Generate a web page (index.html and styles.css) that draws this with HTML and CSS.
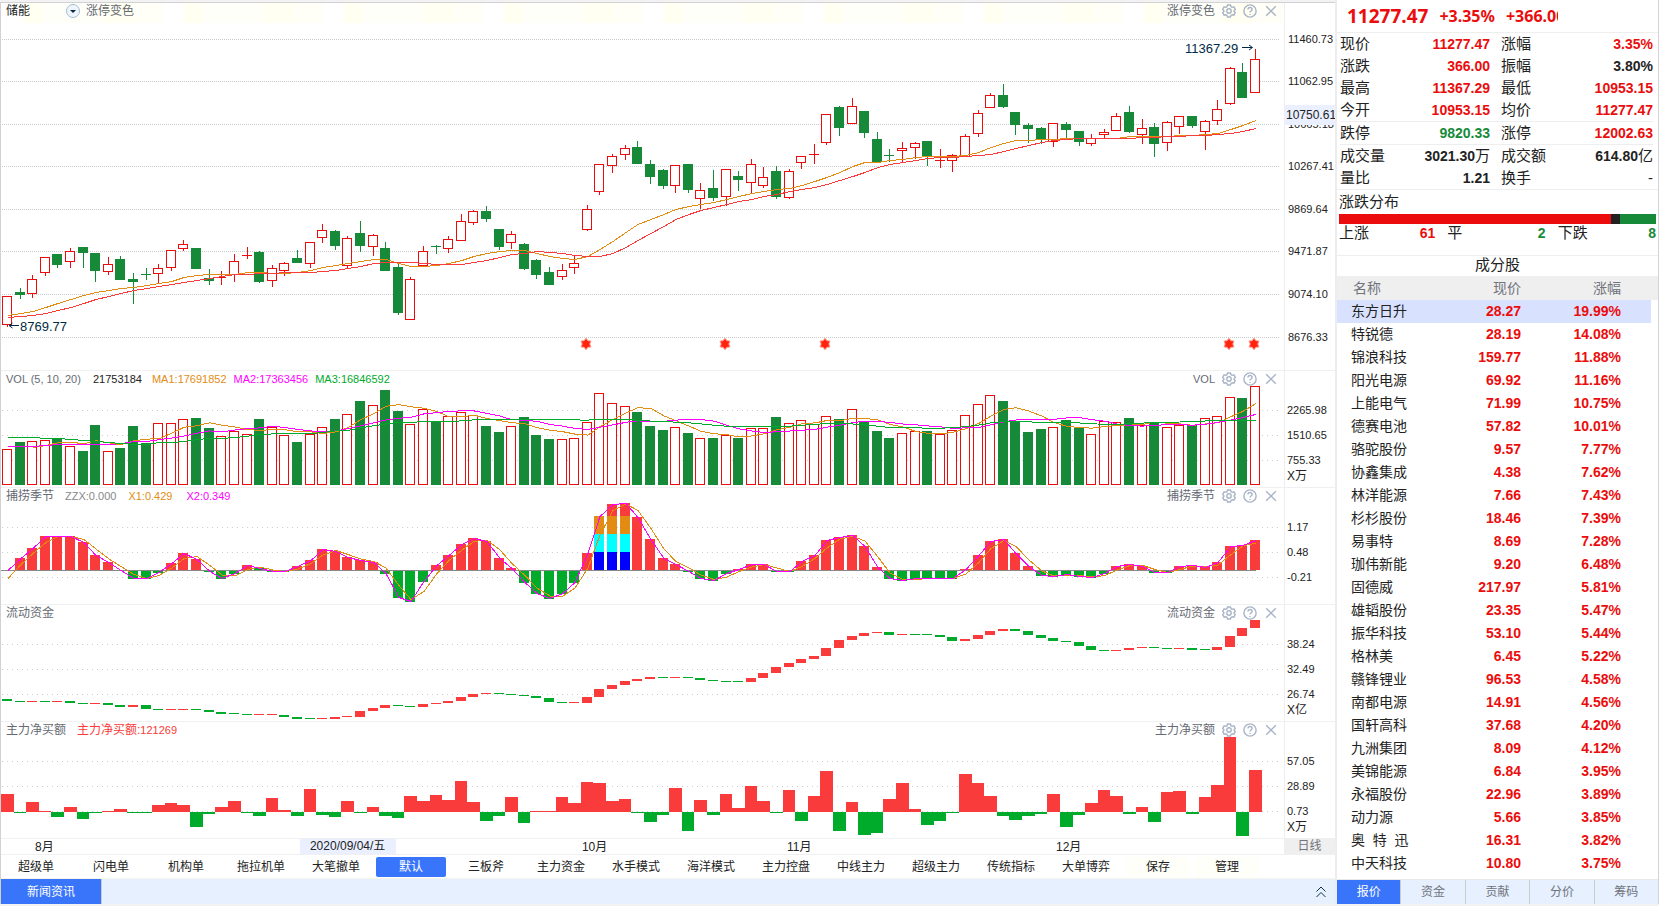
FILE: index.html
```html
<!DOCTYPE html>
<html lang="zh-CN">
<head>
<meta charset="utf-8">
<title>储能 11277.47</title>
<link rel="stylesheet" href="styles.css">
</head>
<body>
<svg class="sprite" aria-hidden="true">
  <symbol id="i-gear" viewBox="0 0 16 16"><path d="M6.300 1.200h3.400l.6 1.900 1.300.7 2-.5 1.600 2.900-1.400 1.500v.7l1.400 1.500-1.600 2.900-2-.5-1.300.7-.6 1.900H6.300L5.700 13l-1.300-.7-2 .5L.8 9.900l1.400-1.500v-.7L.8 6.200l1.600-2.900 2 .5 1.300-.7z"/><circle cx="8" cy="8" r="2.500"/></symbol>
  <symbol id="i-help" viewBox="0 0 16 16"><circle cx="8" cy="8" r="7"/><path d="M5.700 6.300c0-3 4.700-2.900 4.700-.1 0 1.800-2.400 1.800-2.400 3.600M8 11.300v1.300"/></symbol>
  <symbol id="i-close" viewBox="0 0 16 16"><path d="M2.500 2.500l11 11M13.500 2.500l-11 11"/></symbol>
</svg>
<div class="app">
  <main class="charts">
    <section class="panel price">
      <div class="plot">
        <svg id="price" viewBox="1 3 1283 367" preserveAspectRatio="none"></svg>
        <header class="head">
          <span class="name">储能</span>
          <button class="drop" aria-label="切换指标"><svg viewBox="0 0 14 14"><circle cx="7" cy="7" r="6.500"/><path d="M4 6h6L7 9z"/></svg></button>
          <span>涨停变色</span>
          <span class="tools"><span>涨停变色</span></span>
        </header>
      </div>
      <div class="axis" id="axis-price"></div>
    </section>
    <section class="panel volume">
      <div class="plot">
        <svg id="vol" viewBox="1 1 1283 116" preserveAspectRatio="none"></svg>
        <header class="head">
          <span class="vol-name">VOL (5, 10, 20)</span><span class="ink">21753184</span><span class="c-orange">MA1:17691852</span><span class="c-pink">MA2:17363456</span><span class="c-green">MA3:16846592</span>
          <span class="tools"><span>VOL</span></span>
        </header>
      </div>
      <div class="axis" id="axis-vol"></div>
    </section>
    <section class="panel">
      <div class="plot">
        <svg id="season" viewBox="1 1 1283 116" preserveAspectRatio="none"></svg>
        <header class="head">
          <span class="cn">捕捞季节</span><span class="c-grey">ZZX:0.000</span><span class="c-orange">X1:0.429</span><span class="c-pink">X2:0.349</span>
          <span class="tools"><span class="cn">捕捞季节</span></span>
        </header>
      </div>
      <div class="axis" id="axis-season"></div>
    </section>
    <section class="panel">
      <div class="plot">
        <svg id="fund" viewBox="1 1 1283 116" preserveAspectRatio="none"></svg>
        <header class="head">
          <span class="cn">流动资金</span>
          <span class="tools"><span class="cn">流动资金</span></span>
        </header>
      </div>
      <div class="axis" id="axis-fund"></div>
    </section>
    <section class="panel">
      <div class="plot">
        <svg id="net" viewBox="1 1 1283 116" preserveAspectRatio="none"></svg>
        <header class="head">
          <span class="cn">主力净买额</span><span class="c-red"><span class="cn">主力净买额:</span>121269</span>
          <span class="tools"><span class="cn">主力净买额</span></span>
        </header>
      </div>
      <div class="axis" id="axis-net"></div>
    </section>
    <div class="dates">
      <div class="scale" id="dates"></div>
      <button class="period">日线</button>
    </div>
    <nav class="modes">
      <button>超级单</button><button>闪电单</button><button>机构单</button><button>拖拉机单</button><button>大笔撤单</button><button class="on">默认</button><button>三板斧</button><button>主力资金</button><button>水手模式</button><button>海洋模式</button><button>主力控盘</button><button>中线主力</button><button>超级主力</button><button>传统指标</button><button>大单博弈</button><button class="short">保存</button><button class="short">管理</button>
    </nav>
    <div class="news">
      <button class="news-tab">新闻资讯</button>
      <button class="expand" aria-label="展开"><svg viewBox="0 0 10 12"><path d="M.5 5.500L5 1l4.500 4.500M.5 11L5 6.500 9.500 11"/></svg></button>
    </div>
  </main>

  <aside class="quote">
    <div class="top"><strong>11277.47</strong><b>+3.35%</b><b>+366.00</b></div>
    <dl class="stats">
      <div><dt>现价</dt><dd class="up">11277.47</dd></div><div><dt>涨幅</dt><dd class="up">3.35%</dd></div>
      <div><dt>涨跌</dt><dd class="up">366.00</dd></div><div><dt>振幅</dt><dd>3.80%</dd></div>
      <div><dt>最高</dt><dd class="up">11367.29</dd></div><div><dt>最低</dt><dd class="up">10953.15</dd></div>
      <div><dt>今开</dt><dd class="up">10953.15</dd></div><div><dt>均价</dt><dd class="up">11277.47</dd></div>
    </dl>
    <dl class="stats ruled">
      <div><dt>跌停</dt><dd class="down">9820.33</dd></div><div><dt>涨停</dt><dd class="up">12002.63</dd></div>
    </dl>
    <dl class="stats ruled">
      <div><dt>成交量</dt><dd>3021.30<i>万</i></dd></div><div><dt>成交额</dt><dd>614.80<i>亿</i></dd></div>
      <div><dt>量比</dt><dd>1.21</dd></div><div><dt>换手</dt><dd><i>-</i></dd></div>
    </dl>
    <section class="spread">
      <h2>涨跌分布</h2>
      <div class="bar"><span class="b-up"></span><span class="b-flat"></span><span class="b-down"></span></div>
      <dl class="counts">
        <div><dt>上涨</dt><dd class="up">61</dd></div><div><dt>平</dt><dd class="down">2</dd></div><div><dt>下跌</dt><dd class="down">8</dd></div>
      </dl>
    </section>
    <table class="stocks">
      <caption>成分股</caption>
      <thead><tr><th>名称</th><th>现价</th><th>涨幅</th><th></th></tr></thead>
      <tbody id="stocks"></tbody>
    </table>
    <nav class="tabs"><button class="on">报价</button><button>资金</button><button>贡献</button><button>分价</button><button>筹码</button></nav>
  </aside>
</div>
<script src="charts.js"></script>
</body>
</html>
```

FILE: styles.css
```css
* { box-sizing: border-box; margin: 0; padding: 0; }
html { height: 100%; }
body { height: 100%; background: #fff; color: #222; font: 12px/16px "Liberation Sans", "Noto Sans CJK SC", sans-serif; }
button { border: 0; background: none; font: inherit; color: inherit; cursor: pointer; }
i { font-style: normal; font-weight: 400; }
.sprite { position: absolute; width: 0; height: 0; }

.app { display: flex; height: 100%; min-height: 900px; padding-bottom: 2px; background: #f2f2f2; overflow: hidden; }
.charts { flex: 1; min-width: 0; display: flex; flex-direction: column; background: #fff; margin-top: 2px; border-top: 1px solid #d2d2d6; border-left: 1px solid #d2d2d6; }

.panel { flex: 116 1 1px; min-height: 0; display: flex; border-bottom: 1px solid #f0f0f0; }
.panel.price { flex-grow: 367; }
.plot { position: relative; flex: 1; min-width: 0; }
.plot > svg { display: block; position: absolute; width: 100%; height: 100%; }
.axis { position: relative; width: 51px; border-left: 1px solid #eee; overflow: hidden; font-size: 11px; }
.axis span { position: absolute; left: 2px; margin-top: -9px; white-space: nowrap; }
.price .axis span { left: 3px; }
.axis .unit { bottom: 3px; font-size: 12px; }
.price .axis .mark { left: 0; width: 100%; margin-top: -10px; padding-left: 1px; background: #eaf0ff; font-size: 12px; line-height: 20px; }

.head { position: absolute; left: 0; right: 0; top: 0; height: 15px; display: flex; align-items: center; padding: 0 6px 0 5px; font-size: 11px; color: #666a73; }
.price .head { height: 20px; padding-bottom: 4px; font-size: 12px; background: repeating-linear-gradient(90deg, #fffff2 0 20px, #fffffa 20px 80px, #fffff2 80px 110px, #fffff8 110px 140px, #fff 140px 160px) 22px 0 no-repeat; }
.head > span { margin-right: 11px; white-space: nowrap; }
.head .cn { font-size: 12px; }
.head .vol-name { width: 76px; }
.head .name { color: #222; margin-right: 36px; }
.head .ink { color: #222; margin-right: 10px; }
.head > .c-grey { margin-right: 12px; }
.head > .c-orange { margin-right: 14px; }
.volume .head > .c-orange, .volume .head > .c-pink { margin-right: 7px; }
.head > .tools { margin: 0 0 0 auto; display: flex; align-items: center; gap: 7px; }
.tools button, .tools svg, .drop, .drop svg { display: block; width: 14px; height: 14px; }
.tools svg { fill: none; stroke: #a9b4c8; stroke-width: 1.6; }
.drop { margin-right: 6px; }
.drop circle { fill: #f0f5fb; stroke: #9fbfd0; }
.drop path { fill: #002b45; }

.c-orange { color: #e28c14; } .c-pink { color: #f0f; } .c-green { color: #00ab2b; } .c-grey { color: #888; } .c-red { color: #f93b3b; }

/* chart marks */
.plot svg { shape-rendering: crispEdges; }
.plot .head svg { shape-rendering: auto; }
.grid { stroke: #ccc; stroke-width: 1; }
.grid.dense { stroke-dasharray: 1 1; }
.grid.sparse { stroke-dasharray: 1 4; }
.k-up { fill: #fff; stroke: #eb0d0d; }
.w-up { fill: #eb0d0d; }
.k-down { fill: #178a3a; }
.hot { fill: #f93b3b; }
.cold { fill: #00ab2b; }
.zero { fill: #888; }
.s-orange { fill: #e28c14; } .s-cyan { fill: #0ff; } .s-blue { fill: #00f; }
.line { fill: none; stroke-width: 1; vector-effect: non-scaling-stroke; }
.l-orange { stroke: #e28c14; } .l-red { stroke: #f93b3b; } .l-pink { stroke: #f0f; } .l-green { stroke: #00ab2b; }
.halo { fill: #ff2410; stroke: #ff9c88; stroke-width: 1; shape-rendering: auto; }
.note { fill: #002b45; font-size: 13px; }
.arrow { fill: none; stroke: #002b45; shape-rendering: auto; }

.dates { height: 15px; display: flex; line-height: 16px; font-size: 12px; }
.scale { position: relative; flex: 1; }
.scale span { position: absolute; top: 0; font-size: 12px; line-height: 16px; }
.scale .cursor { padding: 0 11px 0 10px; background: #eaf0ff; line-height: 15px; white-space: nowrap; }
.period { width: 51px; background: #efefef; color: #70747c; line-height: 15px; }

.modes { height: 25px; display: flex; align-items: center; gap: 5px; border-top: 1px solid #f0f0f0; border-bottom: 1px solid #f4f4ea; }
.modes button { flex: 0 1 70px; height: 20px; border-radius: 2px; white-space: nowrap; line-height: 20px; }
.modes .short { flex-basis: 64px; background: #fffffa; }
.modes .on, .news-tab, .tabs .on { background: #3875fb; color: #fff; }
.news { height: 25px; display: flex; justify-content: space-between; background: #e6f0ff; }
.news-tab { width: 101px; border-right: 1px solid #ccc; }
.expand { width: 28px; display: flex; align-items: center; justify-content: center; }
.expand svg { width: 10px; height: 12px; fill: none; stroke: #12304a; }

.quote { width: 324px; display: flex; flex-direction: column; background: #fff; border-left: 2px solid #ededf0; border-right: 1px solid #d4d4d8; font-size: 15px; }
.up { color: #eb0d0d; } .down { color: #178a3a; }
.top { height: 32px; flex: none; width: 221px; display: flex; align-items: center; gap: 11px; padding-left: 10px; overflow: hidden; color: #eb0d0d; font-family: "Noto Sans", sans-serif; font-size: 16px; }
.top strong { font-size: 19px; }
.stats { display: grid; grid-template-columns: 150fr 152fr; column-gap: 11px; margin: 0 5px 0 3px; line-height: 22px; }
.top + .stats { margin: 0; padding: 0 5px 0 3px; border-top: 1px solid #eee; }
.stats > div, .counts > div { display: flex; justify-content: space-between; }
.stats.ruled { border-top: 1px solid #eee; }
.stats dd, .counts dd { font-size: 14px; font-weight: 700; }
.stats dd i { font-size: 15px; }
.spread { border-top: 1px solid #eee; border-bottom: 1px solid #eee; padding: 0 2px; }
.spread h2 { font-size: 15px; font-weight: 400; line-height: 24px; }
.bar { height: 10px; display: flex; }
.b-up { flex: 61; background: #eb0d0d; } .b-flat { flex: 2; background: #222; } .b-down { flex: 8; background: #178a3a; }
.counts { display: grid; grid-template-columns: 96fr 98fr 98fr; column-gap: 12px; line-height: 18px; padding-bottom: 13px; }

.stocks { width: 100%; border-collapse: collapse; table-layout: fixed; font-size: 14px; }
.stocks caption { height: 20px; line-height: 18px; font-size: 15px; }
.stocks th { height: 24px; padding-bottom: 1px; background: #efefef; color: #70747c; font-weight: 400; line-height: 20px; text-align: right; }
.stocks th:first-child { width: 106px; padding-left: 16px; text-align: left; }
.stocks th:nth-child(2) { width: 78px; }
.stocks th:nth-child(3) { width: 100px; }
.stocks td { height: 23px; padding-bottom: 2px; line-height: 20px; text-align: right; font-weight: 700; color: #eb0d0d; white-space: pre; }
.stocks td:first-child { padding-left: 14px; text-align: left; font-weight: 400; color: #222; }
.stocks .sel td { background: linear-gradient(#d8e2ff, #d8e2ff) no-repeat; }
.stocks .sel td:last-child { background-size: calc(100% - 7px) 100%; }
.tabs { margin-top: auto; height: 25px; flex: none; display: flex; border-top: 1px solid #e8e8e8; background: #e6f0ff; font-size: 12px; color: #70747c; }
.tabs button { flex: 1; border-right: 1px solid #ccc; }
.tabs button:last-child { border-right: 0; }
```

FILE: charts.js
```js
const STEP = 12.606;
const left = i => Math.round(2 + i * STEP);
const mid = i => left(i) + 6;

// direction, high, body top, body bottom, low
const candles = `
r 296 296 325 327|g 288 292 295 299|r 275 279 294 298|r 257 257 273 276|g 254 254 265 268
r 248 251 262 268|g 247 247 253 268|g 253 253 271 282|r 257 264 272 275|g 256 259 280 280
g 273 279 282 304|g 268 274 275 280|r 264 268 274 283|r 250 250 268 271|r 240 244 249 251
g 248 248 269 269|g 269 278 281 285|r 271 277 278 285|r 254 261 275 282|r 247 255 256 259
g 251 252 282 283|r 265 268 281 287|r 262 263 271 276|g 250 258 263 263|r 242 242 264 268
r 224 230 238 243|g 230 231 246 250|r 236 238 266 269|g 221 233 246 252|r 234 235 247 256
g 242 248 271 271|g 264 267 313 315|r 277 279 320 320|r 246 251 266 266|g 245 246 247 254
r 236 239 249 253|r 214 221 241 241|r 210 211 223 225|g 206 211 219 222|g 229 229 247 250
r 231 234 243 249|g 243 244 269 270|g 259 260 275 279|g 267 272 285 285|r 264 270 277 280
r 256 263 268 274|r 205 209 230 231|r 164 164 192 195|r 154 156 166 173|r 145 148 155 160
g 141 147 164 164|g 160 164 177 184|g 169 170 186 189|r 165 165 186 193|g 164 164 190 193
r 183 190 199 209|g 170 188 198 201|r 169 169 197 206|g 171 176 180 191|r 159 164 183 194
r 167 177 186 188|g 166 171 197 199|r 169 171 198 199|r 156 156 163 169|r 144 154 155 164
r 114 114 143 145|g 106 107 128 136|r 98 106 124 124|g 111 111 133 138|g 132 139 162 162
g 149 155 156 162|r 142 148 151 162|r 142 143 148 159|g 141 141 156 166|r 149 160 161 168
r 154 155 161 172|r 134 136 157 157|r 110 113 134 137|r 93 95 108 108|g 84 95 107 108
g 112 112 125 135|g 123 125 129 143|g 127 128 140 144|r 123 123 142 147|g 122 124 130 139
g 131 131 142 146|r 134 138 144 146|r 129 132 135 138|r 113 116 131 131|g 106 112 132 133
r 119 128 135 144|g 123 127 144 157|r 121 122 143 151|r 116 116 127 134|g 116 116 126 128
r 120 121 132 150|r 100 109 121 125|r 67 68 104 105|g 63 72 98 98|r 49 59 93 93`
  .trim().split(/[|\n]/).map(s => { const [d, ...v] = s.split(' '); return [d, ...v.map(Number)]; });

const maFast = [315,313,311,307,303,299,295,292,290,288,287,285,283,281,277,275,274,274,274,272,272,273,273,272,270,267,265,263,261,259,259,263,266,266,265,263,260,256,253,251,250,250,253,256,258,259,256,249,241,232,224,219,214,209,206,204,202,199,196,193,191,189,188,185,181,177,172,166,162,162,160,159,157,156,156,156,155,152,147,143,140,140,139,139,138,138,138,138,138,136,136,136,136,135,135,134,133,129,125,120];
const maSlow = [317,316,315,313,310,307,303,299,296,293,290,288,286,284,282,280,278,276,274,274,273,273,272,272,272,271,270,268,266,263,262,262,262,263,264,264,264,262,260,257,254,253,251,252,253,255,256,256,253,247,240,233,226,219,214,210,207,204,201,199,196,194,191,189,187,184,180,176,172,167,164,162,160,158,157,157,156,155,154,151,148,145,142,140,139,138,138,138,138,138,137,137,136,136,135,135,134,133,131,128];

const volTops = [79,72,71,70,69,76,81,55,81,78,56,73,53,53,49,48,58,66,61,64,49,57,65,72,64,57,49,44,31,35,20,41,54,39,51,46,42,45,56,62,56,47,65,69,69,68,52,23,33,36,42,56,60,57,63,68,68,65,68,58,58,47,53,50,54,46,49,39,52,61,68,63,61,61,64,60,45,34,25,31,51,62,59,57,50,58,64,51,52,48,55,52,57,55,55,48,46,27,28,16];

const season = [0,12,22,34,34,34,28,15,8,0,-8,-8,-2,7,17,11,-1,-8,-3,5,2,-1,-1,4,10,21,19,13,10,8,-3,-27,-31,-11,5,15,26,32,29,12,2,-12,-23,-28,-23,-12,17,54,66,67,53,31,12,6,-1,-8,-10,-3,1,6,6,-1,-1,9,15,30,33,35,24,3,-8,-10,-8,-8,-8,-8,1,15,29,31,17,4,-5,-6,-4,-6,-7,-3,4,6,4,-2,-2,4,5,3,8,24,25,30];

// top of the block, then its height: positive for inflow, negative for outflow
const fund = `95 -2,97 -1,97 1,97 -1,97 1,97 -2,99 -1,99 1,99 -2,101 -2,101 2,101 -4,105 -1,105 1,105 1,105 -1,106 -2,108 -2,109 -1,110 -1,110 1,110 1,111 -2,113 -2,114 -1,114 1,113 2,112 1,107 6,104 3,101 3,101 -1,102 -1,100 3,99 1,97 2,93 4,90 3,89 1,89 -1,90 -1,91 -1,92 -2,94 -4,98 -1,98 1,93 6,85 8,81 4,77 4,75 2,73 2,73 -1,73 1,73 -1,74 -2,76 -1,77 -1,77 -1,74 4,69 5,63 6,59 4,55 4,52 3,44 8,36 8,32 4,29 3,28 1,28 -3,30 1,30 -1,30 -1,31 -2,33 -4,35 2,31 4,27 4,25 2,25 -2,27 -4,31 -3,34 -3,37 -1,38 -4,42 -4,46 -1,46 1,44 2,43 1,43 -1,44 -1,44 1,44 -2,45 -1,43 3,32 11,24 8,16 8`
  .split(',').map(s => s.split(' ').map(Number));

const net = [18,-1,10,1,-5,5,-7,-1,1,3,-1,-1,7,9,7,-15,-2,5,11,-1,-4,14,2,-4,23,-3,-5,11,-1,5,-4,-6,16,11,17,12,31,10,-9,-4,15,-11,1,1,15,9,30,29,11,13,-1,-10,-3,24,-19,12,-3,18,4,26,11,-1,22,-9,16,41,-19,10,-23,-21,13,29,3,-13,-9,-1,38,29,16,-4,-8,-4,-2,18,-15,-3,9,22,16,-2,5,-10,20,21,-2,15,27,75,-24,42];

const rect = (x, y, w, h, cls) => `<rect x="${x}" y="${y}" width="${w}" height="${h}" class="${cls}"/>`;
const box = (x, y, w, h) => rect(x + .5, y + .5, w - 1, h - 1, 'k-up');
const grid = (ys, cls) => ys.map(y => `<path d="M2 ${y + .5}H1279" class="grid ${cls}"/>`).join('');
const line = (ys, cls) => {
  const pts = ys.map((y, i) => y == null ? null : `${mid(i)},${y + .5}`).filter(Boolean);
  return `<polyline points="${pts.join(' ')}" class="line ${cls}"/>`;
};
// rolling mean; "lead" holds the values that depend on earlier sessions
const mean = (v, n, lead) => v.map((_, i) => i < n - 1 ? lead[i] : v.slice(i - n + 1, i + 1).reduce((a, b) => a + b) / n);
const put = (id, html) => { document.getElementById(id).innerHTML = html; };

function star(i) {
  const cx = left(i) + 4, cy = 344, p = [];
  for (let k = 0; k < 12; k++) {
    const r = k % 2 ? 3.8 : 5.8, a = Math.PI * k / 6 - Math.PI / 2;
    p.push((cx + r * Math.cos(a)).toFixed(1) + ',' + (cy + r * Math.sin(a)).toFixed(1));
  }
  return `<polygon points="${p.join(' ')}" class="halo"/>`;
}

put('price', grid([39, 81, 124, 166, 209, 251, 294, 337], 'dense') +
  candles.map(([d, hi, t, b, lo], i) => {
    const x = left(i), up = d === 'r';
    const wick = rect(x + 5, hi, 1, lo - hi, up ? 'w-up' : 'k-down');
    const body = up ? (b - t > 1 ? box(x, t, 10, b - t) : rect(x, t, 10, 1, 'w-up')) : rect(x, t, 10, b - t, 'k-down');
    return wick + body;
  }).join('') +
  line(maFast, 'l-orange') + line(maSlow, 'l-red') +
  [46, 57, 65, 97, 99].map(star).join('') +
  `<text x="1185" y="53" class="note">11367.29</text><path d="M1242 47.500h10M1249 45l3.500 2.500-3.500 2.500" class="arrow"/>` +
  `<text x="20" y="331" class="note">8769.77</text><path d="M19 325.500H9M12.500 323L9 325.500l3.500 2.500" class="arrow"/>`);

put('vol', grid([40, 65, 90], 'sparse') +
  volTops.map((t, i) => candles[i][0] === 'r' ? box(left(i), t, 10, 115 - t) : rect(left(i), t, 10, 115 - t, 'k-down')).join('') +
  line(mean(volTops, 5, [null, null, 77, 75]), 'l-orange') +
  line(mean(volTops, 10, [76, 76, 76, 75, 74, 74, 74, 74, 74]), 'l-pink') +
  line(mean(volTops, 20, [67, 67, 67, 68, 68, 69, 70, 71, 72, 73, 74, 74, 72, 72, 71, 69, 68, 68, 67]), 'l-green'));

put('season', grid([40, 65, 90], 'sparse') +
  season.map((h, i) => {
    const x = left(i);
    if (i > 46 && i < 50) {
      return rect(x, 83 - h, 10, h, 'hot') + rect(x, 29, 10, 18, 's-orange') + rect(x, 47, 10, 18, 's-cyan') + rect(x, 65, 10, 18, 's-blue');
    }
    return h > 0 ? rect(x, 83 - h, 10, h, h < 3 && season[i - 1] > h && i < 40 ? 'cold' : 'hot') : rect(x, 84, 10, -h, 'cold');
  }).join('') +
  rect(1, 83, 1255, 1, 'zero') +
  line(season.map((h, i) => i ? 83 - (h + season[i - 1]) / 2 : 91), 'l-orange') +
  line(season.map(h => 83 - h), 'l-pink'));

put('fund', grid([40, 65, 90], 'sparse') +
  fund.map(([t, h], i) => rect(left(i), t, 10, Math.abs(h), h > 0 ? 'hot' : 'cold')).join(''));

put('net', grid([40, 65, 90], 'sparse') +
  net.map((h, i) => {
    const x = left(i) - 1, w = left(i + 1) - left(i);
    return h > 0 ? rect(x, 91 - h, w, h, 'hot') : rect(x, 91, w, -h, 'cold');
  }).join(''));

// value axes: [label, y] inside a plot of the given height
const axis = (id, labels, height, extra = '') =>
  put(id, labels.map(([t, y]) => `<span style="top:${(y / height * 100).toFixed(2)}%">${t}</span>`).join('') + extra);
axis('axis-price', [['11460.73', 37], ['11062.95', 79], ['10665.18', 122], ['10267.41', 164], ['9869.64', 207], ['9471.87', 249], ['9074.10', 292], ['8676.33', 335]], 367,
  '<span class="mark" style="top:30.50%">10750.61</span>');
const unit = t => `<span class="unit">${t}</span>`;
axis('axis-vol', [['2265.98', 40], ['1510.65', 65], ['755.33', 90]], 116, unit('X万'));
axis('axis-season', [['1.17', 40], ['0.48', 65], ['-0.21', 90]], 116);
axis('axis-fund', [['38.24', 40], ['32.49', 65], ['26.74', 90]], 116, unit('X亿'));
axis('axis-net', [['57.05', 40], ['28.89', 65], ['0.73', 90]], 116, unit('X万'));

put('dates', [['8月', 34], ['10月', 581], ['11月', 786], ['12月', 1055], ['2020/09/04/五', 299]]
  .map(([t, x]) => `<span${t.includes('/') ? ' class="cursor"' : ''} style="left:${(x / 1283 * 100).toFixed(2)}%">${t}</span>`).join(''));

document.querySelectorAll('.tools').forEach(el => {
  [['gear', '设置'], ['help', '帮助'], ['close', '关闭']].forEach(([n, label]) => {
    el.insertAdjacentHTML('beforeend', `<button aria-label="${label}"><svg><use href="#i-${n}"/></svg></button>`);
  });
});

const stocks = [['东方日升', '28.27', '19.99'], ['特锐德', '28.19', '14.08'], ['锦浪科技', '159.77', '11.88'], ['阳光电源', '69.92', '11.16'], ['上能电气', '71.99', '10.75'], ['德赛电池', '57.82', '10.01'], ['骆驼股份', '9.57', '7.77'], ['协鑫集成', '4.38', '7.62'], ['林洋能源', '7.66', '7.43'], ['杉杉股份', '18.46', '7.39'], ['易事特', '8.69', '7.28'], ['珈伟新能', '9.20', '6.48'], ['固德威', '217.97', '5.81'], ['雄韬股份', '23.35', '5.47'], ['振华科技', '53.10', '5.44'], ['格林美', '6.45', '5.22'], ['赣锋锂业', '96.53', '4.58'], ['南都电源', '14.91', '4.56'], ['国轩高科', '37.68', '4.20'], ['九洲集团', '8.09', '4.12'], ['美锦能源', '6.84', '3.95'], ['永福股份', '22.96', '3.89'], ['动力源', '5.66', '3.85'], ['奥  特  迅', '16.31', '3.82'], ['中天科技', '10.80', '3.75']];
put('stocks', stocks.map(([n, p, c], i) => `<tr${i ? '' : ' class="sel"'}><td>${n}</td><td>${p}</td><td>${c}%</td><td></td></tr>`).join(''));
```
